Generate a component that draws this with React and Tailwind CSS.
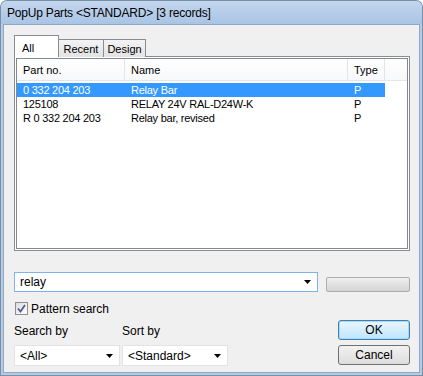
import React from "react";

const rows = [
  { part: "0 332 204 203", name: "Relay Bar", type: "P", selected: true },
  { part: "125108", name: "RELAY 24V RAL-D24W-K", type: "P" },
  { part: "R 0 332 204 203", name: "Relay bar, revised", type: "P" },
];

function Arrow() {
  return (
    <svg width="7" height="4" viewBox="0 0 7 4" className="block">
      <path d="M0 0h7L3.5 4z" fill="#000" />
    </svg>
  );
}

function Combo({ value, className }) {
  return (
    <div
      className={
        "flex items-center justify-between bg-white border px-[5px] pr-[6px] " +
        className
      }
    >
      <span>{value}</span>
      <Arrow />
    </div>
  );
}

export default function App() {
  return (
    <div
      className="w-[423px] h-[376px] bg-[#7a8ea6] p-px rounded-t-[7px] text-[11px] text-black"
      style={{ fontFamily: '"Liberation Sans", Arial, sans-serif' }}
    >
      <div className="h-full flex flex-col rounded-t-[6px] bg-[#b4cbe6]">
        {/* title bar */}
        <div className="h-[23px] shrink-0 flex items-center pl-[6px] text-[12px] tracking-[-0.2px] rounded-t-[6px] bg-gradient-to-b from-[#c3d6ed] to-[#a9c4e4]">
          PopUp Parts &lt;STANDARD&gt; [3 records]
        </div>

        <div className="flex-1 mx-[2px] mb-[2px] bg-[#f0f0f0] border border-[#8fa8c6] pl-[10px] pr-[9px] pt-[11px] flex flex-col">
          {/* tabs */}
          <div className="flex items-end h-[21px] relative z-10">
            <div className="w-[45px] h-[22px] bg-white border border-b-0 border-[#898c95] pl-[7px] pt-[4px]">
              All
            </div>
            <div className="w-[45px] h-[18px] border border-b-0 border-l-0 border-[#898c95] bg-gradient-to-b from-[#f3f3f3] to-[#e3e3e3] flex items-center justify-center pt-[2px]">
              Recent
            </div>
            <div className="w-[42px] h-[18px] border border-b-0 border-l-0 border-[#898c95] bg-gradient-to-b from-[#f3f3f3] to-[#e3e3e3] flex items-center justify-center pt-[2px]">
              Design
            </div>
          </div>

          {/* tab panel */}
          <div className="h-[195px] bg-white border border-[#898c95] p-px -mt-px">
            <div className="h-full border border-[#828790] flex flex-col">
              <div className="h-[22px] flex border-b border-[#e5e5e5] bg-gradient-to-b from-white to-[#f7f8fa]">
                <div className="w-[108px] border-r border-[#e5e5e5] pl-[6px] pt-[2px] flex items-center">
                  Part no.
                </div>
                <div className="w-[223px] border-r border-[#e5e5e5] pl-[6px] pt-[2px] flex items-center">
                  Name
                </div>
                <div className="w-[37px] border-r border-[#e5e5e5] pl-[6px] pt-[2px] flex items-center">
                  Type
                </div>
                <div className="flex-1" />
              </div>
              <div className="pt-[2px] tracking-[-0.25px]">
                {rows.map((r) => (
                  <div
                    key={r.part}
                    className={
                      "w-[368px] h-[14px] flex items-center " +
                      (r.selected ? "bg-[#3399ff] text-white" : "")
                    }
                  >
                    <div className="w-[108px] pl-[6px]">{r.part}</div>
                    <div className="w-[223px] pl-[6px]">{r.name}</div>
                    <div className="w-[37px] pl-[6px]">{r.type}</div>
                  </div>
                ))}
              </div>
            </div>
          </div>

          {/* search row */}
          <div className="flex items-start mt-[21px] gap-[8px]">
            <Combo
              value="relay"
              className="w-[304px] h-[20px] border-[#7eb4ea] text-[12px]"
            />
            <div className="mt-[5px] w-[84px] h-[15px] rounded-[2px] border border-[#adadad] bg-gradient-to-b from-[#efefef] to-[#d4d4d4]" />
          </div>

          <label className="flex items-center mt-[10px] gap-[3px] pl-px h-[13px]">
            <span className="w-[13px] h-[13px] border border-[#8e8f8f] bg-gradient-to-br from-[#dcdcdc] to-white flex items-center justify-center">
              <svg width="9" height="9" viewBox="0 0 9 9">
                <path
                  d="M1 4.5l2.5 3L8 1"
                  fill="none"
                  stroke="#4a5f97"
                  strokeWidth="1.8"
                />
              </svg>
            </span>
            <span className="text-[12px]">Pattern search</span>
          </label>

          <div className="flex items-start justify-between mt-[5px]">
            <div className="flex gap-[2px]">
              <div className="flex flex-col">
                <span className="h-[22px] flex items-center text-[12px] mb-[3px]">Search by</span>
                <Combo
                  value="<All>"
                  className="w-[106px] h-[21px] border-[#e3e3e3] text-[12px]"
                />
              </div>
              <div className="flex flex-col">
                <span className="h-[22px] flex items-center text-[12px] mb-[3px]">Sort by</span>
                <Combo
                  value="<Standard>"
                  className="w-[106px] h-[21px] border-[#e3e3e3] text-[12px]"
                />
              </div>
            </div>
            <div className="flex flex-col gap-[5px]">
              <button className="w-[72px] h-[20px] rounded-[3px] border border-[#3c7fb1] bg-gradient-to-b from-[#eaf6fd] to-[#bee6fd] text-[12px] shadow-[inset_0_0_0_1px_#a7d9f5]">
                OK
              </button>
              <button className="w-[72px] h-[20px] rounded-[3px] border border-[#707070] bg-gradient-to-b from-[#f2f2f2] to-[#dddddd] text-[12px]">
                Cancel
              </button>
            </div>
          </div>
        </div>
      </div>
    </div>
  );
}
